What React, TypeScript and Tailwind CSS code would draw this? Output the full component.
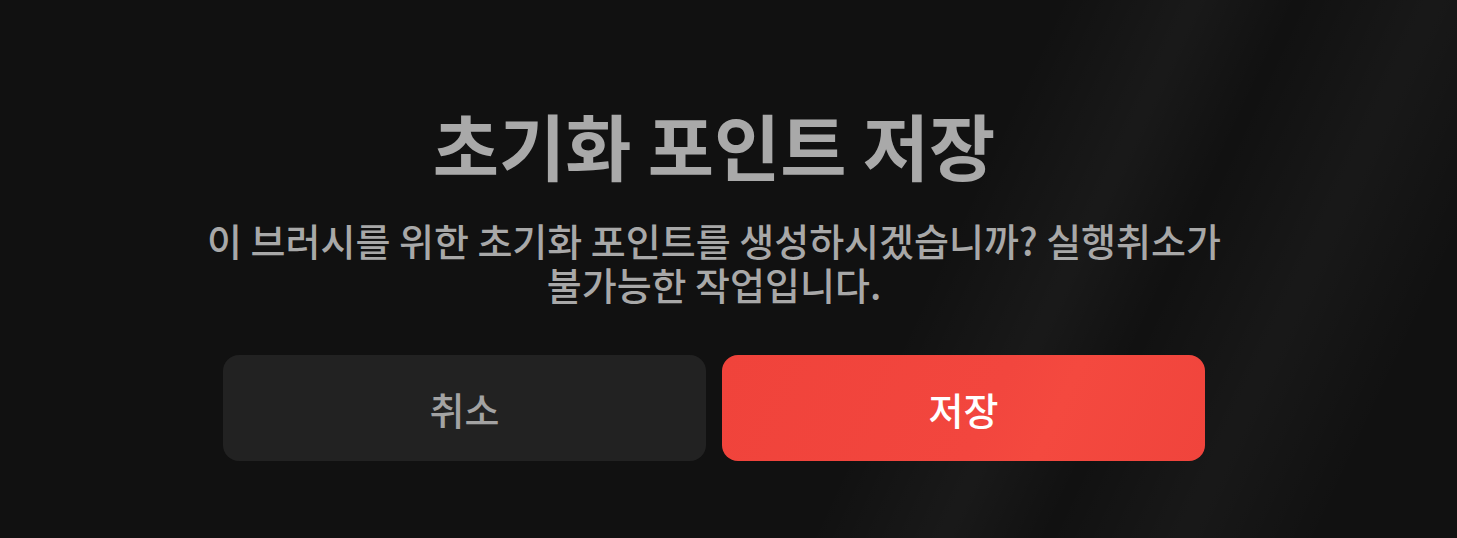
export default function App() {
  return (
    <div
      className="relative h-[538px] w-full overflow-hidden bg-[#111111]"
      style={{ fontFamily: '"Noto Sans CJK KR", "Noto Sans", sans-serif' }}
    >
      {/* soft glassy streaks on the right */}
      <div className="pointer-events-none absolute inset-0 bg-[linear-gradient(115deg,transparent_62%,rgba(255,255,255,0.035)_70%,transparent_76%,rgba(255,255,255,0.03)_84%,transparent_92%)]" />

      <div className="relative ml-[223px] flex w-[982px] flex-col items-center pt-[100px]">
        <h1 className="text-[72px] font-bold leading-[88px] text-[#a9a9a9]">초기화 포인트 저장</h1>
        <p className="mt-[30px] w-[1100px] text-center text-[38px] font-medium leading-[44px] text-[#a8a8a8]">
          이 브러시를 위한 초기화 포인트를 생성하시겠습니까? 실행취소가
          <br />
          불가능한 작업입니다.
        </p>

        <div className="mt-[49px] grid w-full grid-cols-2 gap-4">
          <button className="h-[106px] rounded-2xl bg-[#222222] text-[38px] font-medium text-[#a3a3a3]">
            취소
          </button>
          <button className="h-[106px] rounded-2xl bg-[linear-gradient(115deg,#f0433b_0%,#f2463e_55%,#f4493f_68%,#f0443c_100%)] text-[38px] font-medium text-white">
            저장
          </button>
        </div>
      </div>
    </div>
  );
}
